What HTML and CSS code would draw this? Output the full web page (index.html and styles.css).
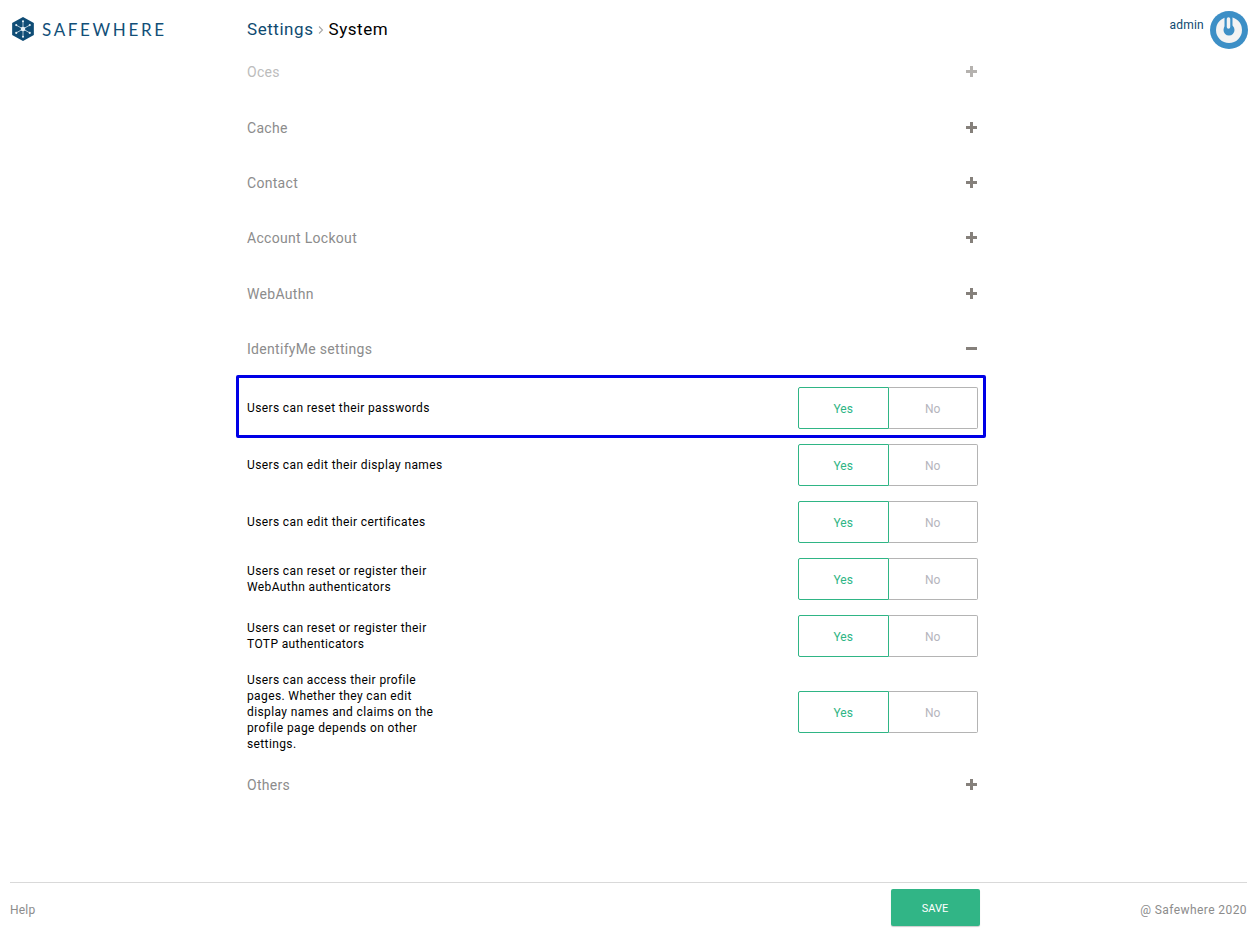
FILE: index.html
```html
<!DOCTYPE html>
<html lang="en">
<head>
<meta charset="utf-8">
<title>Settings - System</title>
<link rel="stylesheet" href="styles.css">
</head>
<body>
<div class="page">
  <header class="topbar">
    <div class="brand">
      <svg class="brand-mark" viewBox="1.6 .5 20.8 23" aria-hidden="true">
        <path class="hex" d="M12 .5 22.4 6.2V17.8L12 23.5 1.6 17.8V6.2Z"/>
        <g class="flake">
          <path d="M12 4.5v15M5.5 8.25l13 7.5M18.500 8.25l-13 7.500"/>
        </g>
        <g class="dots">
          <circle cx="12" cy="4.500" r="1"/><circle cx="12" cy="19.500" r="1"/>
          <circle cx="5.500" cy="8.250" r="1"/><circle cx="18.500" cy="8.250" r="1"/>
          <circle cx="5.500" cy="15.750" r="1"/><circle cx="18.500" cy="15.750" r="1"/>
          <circle cx="12" cy="12" r="2.200"/>
        </g>
      </svg>
      <span class="brand-name">SAFEWHERE</span>
    </div>
    <nav class="crumbs">
      <span class="crumb-link">Settings</span>
      <svg class="crumb-sep" viewBox="0 0 6 10" aria-hidden="true"><path d="M1 1.500l3.500 3.500-3.500 3.500"/></svg>
      <span class="crumb-current">System</span>
    </nav>
    <div class="user">
      <span class="user-name">admin</span>
      <svg class="power" viewBox="0 0 38 38" aria-hidden="true">
        <circle class="power-bg" cx="19" cy="19" r="19"/>
        <circle class="power-ring" cx="19" cy="19" r="9.250"/>
        <path class="power-gap" d="M18.500 5v14"/>
        <path class="power-bar" d="M18.500 8v8"/>
      </svg>
    </div>
  </header>

  <main class="content">
    <div class="section section-faded"><span>Oces</span><i class="icon plus"></i></div>
    <div class="section"><span>Cache</span><i class="icon plus"></i></div>
    <div class="section"><span>Contact</span><i class="icon plus"></i></div>
    <div class="section"><span>Account Lockout</span><i class="icon plus"></i></div>
    <div class="section"><span>WebAuthn</span><i class="icon plus"></i></div>
    <div class="section"><span>IdentifyMe settings</span><i class="icon minus"></i></div>

    <div class="rows">
      <div class="row row-focus">
        <div class="row-label">Users can reset their passwords</div>
        <div class="toggle"><span class="yes">Yes</span><span class="no">No</span></div>
      </div>
      <div class="row">
        <div class="row-label">Users can edit their display names</div>
        <div class="toggle"><span class="yes">Yes</span><span class="no">No</span></div>
      </div>
      <div class="row">
        <div class="row-label">Users can edit their certificates</div>
        <div class="toggle"><span class="yes">Yes</span><span class="no">No</span></div>
      </div>
      <div class="row">
        <div class="row-label">Users can reset or register their WebAuthn authenticators</div>
        <div class="toggle"><span class="yes">Yes</span><span class="no">No</span></div>
      </div>
      <div class="row">
        <div class="row-label">Users can reset or register their TOTP authenticators</div>
        <div class="toggle"><span class="yes">Yes</span><span class="no">No</span></div>
      </div>
      <div class="row">
        <div class="row-label">Users can access their profile pages. Whether they can edit display names and claims on the profile page depends on other settings.</div>
        <div class="toggle"><span class="yes">Yes</span><span class="no">No</span></div>
      </div>
    </div>

    <div class="section"><span>Others</span><i class="icon plus"></i></div>
  </main>

  <footer class="footer">
    <span class="help">Help</span>
    <button class="save" type="button">SAVE</button>
    <span class="copy">@ Safewhere 2020</span>
  </footer>
</div>
</body>
</html>
```

FILE: styles.css
```css
* { box-sizing: border-box; }
html, body { margin: 0; padding: 0; background: #fff; }
body { font-family: Roboto, "Liberation Sans", sans-serif; color: #000; }
.page { height: 928px; display: flex; flex-direction: column; overflow: hidden; }

.topbar { height: 44.7px; display: flex; align-items: flex-start; padding-left: 12px; flex: none; position: relative; }
.brand { width: 235px; height: 58px; display: flex; align-items: center; gap: 8px; flex: none; }
.brand-mark { width: 22px; height: 24px; flex: none; }
.hex { fill: #0f4c75; }
.flake path { stroke: #cfe0ea; stroke-width: .8; fill: none; }
.dots circle { fill: #e6eff4; }
.brand-name { font-family: Lato, "Open Sans", sans-serif; font-size: 17px; letter-spacing: 2.65px; color: #124f78; line-height: 1; }

.crumbs { height: 58px; display: flex; align-items: center; font-size: 17px; letter-spacing: .55px; }
.crumb-link { color: #0e4a70; }
.crumb-current { color: #000; }
.crumb-sep { width: 6px; height: 10px; margin: 2px 4px 0 5px; }
.crumb-sep path { fill: none; stroke: #a8a8a8; stroke-width: 1.1; }

.user { margin-left: auto; margin-right: 8px; height: 58px; display: flex; align-items: flex-start; gap: 6px; padding-top: 11px; }
.user-name { font-size: 12px; color: #0e4a70; line-height: 28px; letter-spacing: .25px; }
.power { width: 38px; height: 38px; flex: none; }
.power-bg { fill: #3d8fc6; }
.power-ring { fill: none; stroke: #f3f3f3; stroke-width: 7.500; }
.power-gap { stroke: #3d8fc6; stroke-width: 8; fill: none; }
.power-bar { stroke: #f3f3f3; stroke-width: 3.500; fill: none; stroke-linecap: round; }

.content { flex: 1; width: 731px; margin-left: 247px; }
.section { height: 55.33px; display: flex; align-items: center; justify-content: space-between; font-size: 14px; letter-spacing: .3px; color: #8c8c8c; }
.section-faded { color: #bcbcbc; }
.section-faded .icon { opacity: .6; }
.icon { position: relative; display: block; width: 11px; height: 11px; margin: 0 1px 1px 0; }
.icon::before { content: ""; position: absolute; left: 0; right: 0; top: 4px; height: 3px; background: #85807b; }
.plus::after { content: ""; position: absolute; top: 0; bottom: 0; left: 4px; width: 3px; background: #85807b; }

.rows { padding-top: 10.3px; margin-bottom: 5px; }
.row { display: flex; align-items: center; justify-content: space-between; min-height: 42px; margin-bottom: 15px; position: relative; }
.row:last-child { margin-bottom: 0; }
.row-focus::after { content: ""; position: absolute; left: -11px; right: -8px; top: -12px; bottom: -9px; border: 3px solid #0000e6; border-radius: 2px; pointer-events: none; }
.row-label { width: 195px; font-size: 12px; line-height: 16px; letter-spacing: .38px; color: #000; }
.row:nth-child(-n+3) .row-label { width: 300px; }

.toggle { display: flex; width: 180px; height: 42px; font-size: 12px; flex: none; }
.toggle span { flex: 1; display: flex; align-items: center; justify-content: center; padding-top: 2px; }
.yes { border: 1px solid #2fb585; border-radius: 2px 0 0 2px; color: #2fb585; }
.no { border: 1px solid #b4b4b4; border-left: 0; border-radius: 0 2px 2px 0; color: #b5b5bd; }

.footer { margin: 0 9px 0 10px; height: 46px; border-top: 1px solid #d9d9d9; display: flex; align-items: flex-start; position: relative; flex: none; font-size: 12px; letter-spacing: .42px; color: #8c8c8c; }
.help { line-height: 16px; margin-top: 19px; letter-spacing: .2px; }
.save { margin-left: 856px; margin-top: 6px; width: 89px; height: 37px; background: #31b586; border: 0; border-radius: 2px; box-shadow: 0 1px 1px rgba(0,0,0,.2); color: #fff; font: 11px Roboto, sans-serif; padding: 2px 2px 0 0; }
.copy { margin-left: auto; line-height: 16px; margin-top: 19px; }
```
